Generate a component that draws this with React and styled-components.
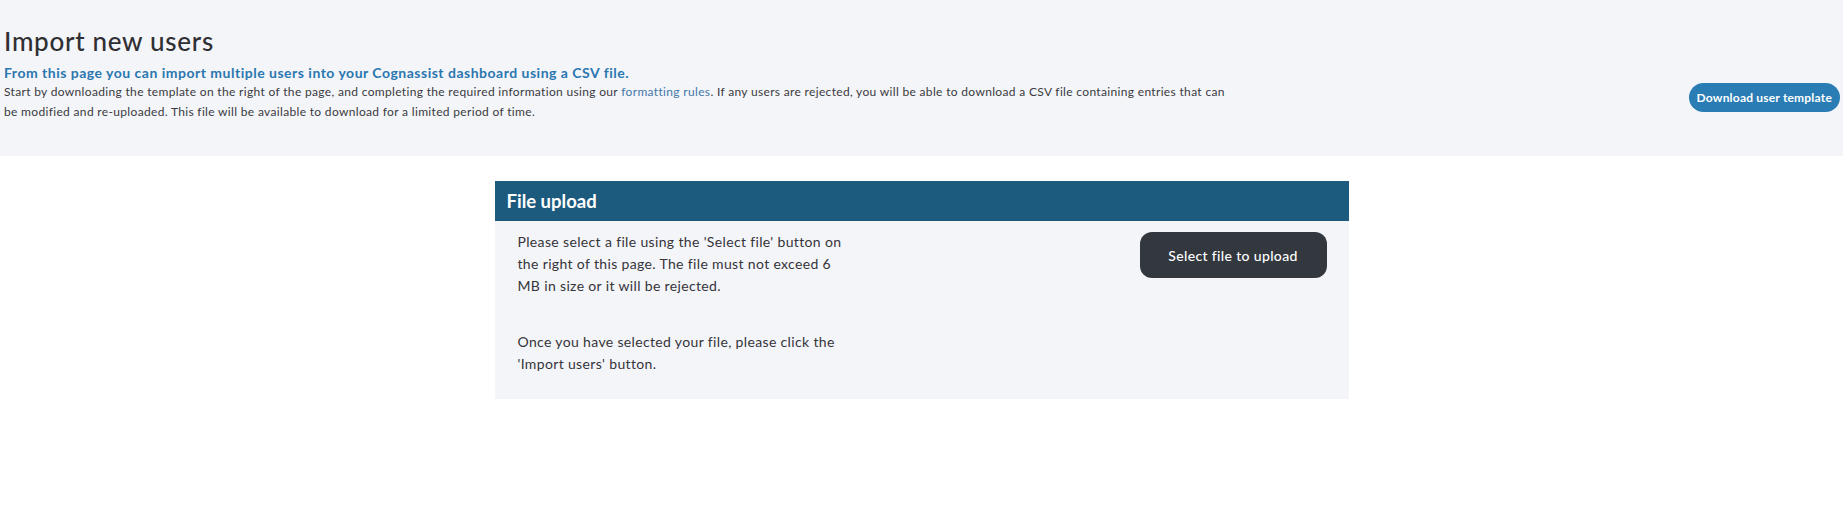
import styled, { createGlobalStyle } from 'styled-components';

const GlobalStyle = createGlobalStyle`
  body {
    margin: 0;
    background: #ffffff;
    font-family: Lato, "Open Sans", sans-serif;
    color: #333333;
  }
`;

const Header = styled.header`
  background: #f4f5f9;
  height: 156px;
  box-sizing: border-box;
  padding: 26px 3px 0 4px;
  display: flex;
  align-items: flex-start;
  justify-content: space-between;
`;

const Intro = styled.div`
  max-width: 1235px;
`;

const Title = styled.h1`
  margin: 0;
  font-size: 26px;
  line-height: 30px;
  font-weight: 500;
  letter-spacing: 0.7px;
  color: #2f2f33;
`;

const Lead = styled.p`
  margin: 8px 0 0;
  font-size: 14px;
  line-height: 18px;
  font-weight: 700;
  letter-spacing: 0.5px;
  color: #2a77b0;
`;

const Body = styled.p`
  margin: 0;
  font-size: 12px;
  line-height: 20px;
  letter-spacing: 0.33px;
  color: #3a3a40;
`;

const Link = styled.a`
  color: #4478a8;
  text-decoration: none;
`;

const PillButton = styled.button`
  margin-top: 57px;
  height: 29px;
  padding: 0 8px;
  border: none;
  border-radius: 15px;
  background: #2a7db4;
  color: #ffffff;
  font-family: inherit;
  font-size: 12px;
  font-weight: 700;
  letter-spacing: 0.2px;
  white-space: nowrap;
`;

const Card = styled.section`
  width: 854px;
  margin: 25px auto 0;
  background: #f4f5f9;
`;

const CardHeader = styled.h2`
  margin: 0;
  height: 40px;
  padding: 0 12px;
  display: flex;
  align-items: center;
  background: #1c5a7e;
  color: #ffffff;
  font-size: 18.5px;
  font-weight: 700;
`;

const CardBody = styled.div`
  display: flex;
  justify-content: space-between;
  align-items: flex-start;
  padding: 10px 22px 24px 23px;
`;

const Notes = styled.div`
  width: 335px;
`;

const Note = styled.p`
  margin: 0 0 ${(p) => p.$gap || 0}px;
  font-size: 14px;
  line-height: 22px;
  letter-spacing: 0.35px;
  color: #34343a;
`;

const DarkButton = styled.button`
  margin-top: 1px;
  width: 187px;
  height: 46px;
  border: none;
  border-radius: 12px;
  background: #33373e;
  color: #ffffff;
  font-family: inherit;
  font-size: 14px;
  font-weight: 500;
  letter-spacing: 0.35px;
`;

export default function App() {
  return (
    <>
      <GlobalStyle />
      <Header>
        <Intro>
          <Title>Import new users</Title>
          <Lead>From this page you can import multiple users into your Cognassist dashboard using a CSV file.</Lead>
          <Body>
            Start by downloading the template on the right of the page, and completing the required information using our{' '}
            <Link href="#">formatting rules</Link>. If any users are rejected, you will be able to download a CSV file containing entries that can be modified and re-uploaded. This file will be available to download for a limited period of time.
          </Body>
        </Intro>
        <PillButton>Download user template</PillButton>
      </Header>
      <Card>
        <CardHeader>File upload</CardHeader>
        <CardBody>
          <Notes>
            <Note $gap={34}>
              Please select a file using the 'Select file' button on the right of this page. The file must not exceed 6 MB in size or it will be rejected.
            </Note>
            <Note>Once you have selected your file, please click the 'Import users' button.</Note>
          </Notes>
          <DarkButton>Select file to upload</DarkButton>
        </CardBody>
      </Card>
    </>
  );
}
